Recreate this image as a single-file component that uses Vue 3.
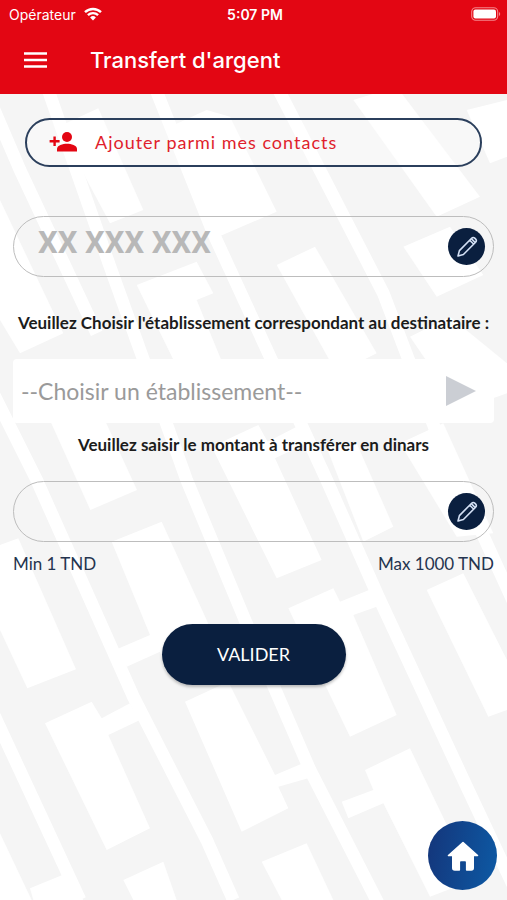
<template>
  <div class="screen">
    <svg class="backdrop" viewBox="0 0 1521 2700" preserveAspectRatio="xMidYMin slice" aria-hidden="true">
      <polyline v-for="line in lanes" :key="line" :points="line" />
      <polygon v-for="shape in blocks" :key="shape" :points="shape" />
    </svg>

    <header class="app-header">
      <div class="status-bar">
        <div class="carrier">
          <span>Opérateur</span>
          <svg width="18" height="14" viewBox="0 0 18 14" aria-hidden="true">
            <g fill="none" stroke="#fff" stroke-width="2.4">
              <path d="M1 5.2a11.6 11.6 0 0 1 16 0" />
              <path d="M3.9 8.2a7.4 7.4 0 0 1 10.2 0" />
            </g>
            <path d="M9 13.4 6.1 10.4a4.2 4.2 0 0 1 5.8 0z" fill="#fff" />
          </svg>
        </div>
        <span class="time">5:07 PM</span>
        <div class="battery">
          <svg width="30" height="14" viewBox="0 0 30 14" aria-hidden="true">
            <rect x="0.7" y="0.7" width="26" height="12.6" rx="4" fill="none" stroke="#f5868c" stroke-width="1.1" />
            <rect x="2.4" y="2.4" width="22.6" height="9.2" rx="2" fill="#fff" />
            <path d="M28 5v4c1.6-.6 1.6-3.4 0-4z" fill="#f5868c" />
          </svg>
        </div>
      </div>
      <div class="title-bar">
        <button class="menu-btn" type="button" aria-label="Menu">
          <svg width="24" height="18" viewBox="0 0 24 18">
            <path d="M0 2.5h23M0 9h23M0 15.5h23" stroke="#fff" stroke-width="2.4" />
          </svg>
        </button>
        <h1>Transfert d'argent</h1>
      </div>
    </header>

    <form class="transfer-form" @submit.prevent>
      <button class="contact-btn" type="button">
        <svg width="30" height="24" viewBox="0 0 30 24" fill="#e30613" aria-hidden="true">
          <circle cx="18" cy="7" r="5" />
          <path d="M8 21.600v-2.600c0-3.600 5.800-5.200 10-5.200s10 1.600 10 5.200v2.600z" />
          <path d="M4.400 6.400h2.400v3.600h3.800v2.400H6.800v3.600H4.400v-3.600H.6V10h3.800z" />
        </svg>
        <span>Ajouter parmi mes contacts</span>
      </button>

      <div class="field phone">
        <input v-model="phone" type="tel" placeholder="XX XXX XXX" aria-label="Numéro" />
        <button class="edit-btn" type="button" aria-label="Modifier le numéro">
          <svg width="24" height="24" viewBox="0 0 24 24">
            <path d="M3 21l1.400-5.400L16.600 3.200c1-1 2.200-1 3.100-.1l1 1c.9.900.9 2.100-.1 3.100L8.400 19.500z M14.700 5.200l4.100 4.100M16.300 3.600l4.100 4.100" />
          </svg>
        </button>
      </div>

      <label class="caption" for="bank">Veuillez Choisir l'établissement correspondant au destinataire :</label>

      <div class="select-box">
        <select id="bank" v-model="bank">
          <option value="">--Choisir un établissement--</option>
        </select>
        <svg width="30" height="32" viewBox="0 0 30 32" aria-hidden="true">
          <path d="M0 1l30 15L0 31z" fill="#cbced4" />
        </svg>
      </div>

      <label class="caption" for="amount">Veuillez saisir le montant à transférer en dinars</label>

      <div class="field amount">
        <input id="amount" v-model="amount" type="text" inputmode="decimal" />
        <button class="edit-btn" type="button" aria-label="Modifier le montant">
          <svg width="24" height="24" viewBox="0 0 24 24">
            <path d="M3 21l1.400-5.400L16.600 3.200c1-1 2.200-1 3.100-.1l1 1c.9.900.9 2.100-.1 3.100L8.400 19.500z M14.700 5.200l4.100 4.100M16.300 3.600l4.100 4.100" />
          </svg>
        </button>
      </div>

      <div class="limits">
        <span>Min 1 TND</span>
        <span>Max 1000 TND</span>
      </div>

      <button class="submit-btn" type="submit">VALIDER</button>
    </form>

    <button class="home-btn" type="button" aria-label="Accueil">
      <svg width="34" height="32" viewBox="0 0 34 32">
        <path
          d="M17 2.500 2.500 15.500h4.300V28q0 2 2 2h4.500v-8q0-1.600 1.600-1.600h4.200q1.600 0 1.600 1.600v8h4.500q2 0 2-2V15.500h4.300z"
          fill="#fff" stroke="#fff" stroke-width="1.600" stroke-linejoin="round"
        />
      </svg>
    </button>
  </div>
</template>

<script setup>
import { ref } from 'vue';

const phone = ref('');
const bank = ref('');
const amount = ref('');

// slanted lanes and blocks of the watermark
const lanes = [
  '-30,300 60,510 290,1000',
  '-260,1180 -20,2140 240,2700',
  '-30,1160 110,1440 400,2090 620,2520 700,2700',
  '120,200 330,800 560,1440 735,1860 930,2310 1150,2740',
  '440,200 640,700 980,1440 1135,1790 1400,2360 1560,2700',
  '800,200 1150,880 1310,1300 1560,1850'
];

const blocks = [
  '175,380 295,325 430,630 330,670',
  '410,855 590,785 640,880 590,900 680,1120 540,1120',
  '500,385 620,330 690,350 830,635 645,715',
  '830,795 945,740 1130,1060 1010,1120',
  '1060,300 1190,260 1440,590 1310,650',
  '1400,330 1521,300 1521,470 1470,490',
  '1210,740 1350,680 1450,825 1310,890',
  '1230,1010 1350,950 1521,1090 1521,1180 1380,1230',
  '0,600 190,1000 60,1060 0,960',
  '100,1150 236,1090 411,1470 271,1530',
  '635,1340 775,1275 803,1325 890,1280 920,1330 825,1375 965,1680 830,1735',
  '0,1635 55,1615 228,2008 82,2065 0,1890',
  '335,1625 485,1565 620,1860 660,1960 500,2020 480,1955 380,2000 345,1950 450,1905',
  '975,1330 1070,1330 1180,1580 1090,1625',
  '1200,1330 1330,1270 1480,1600 1370,1610',
  '865,1825 1000,1765 1020,1805 1120,1765 1145,1815 1060,1845 1190,2145 1050,2210',
  '1280,1770 1390,1720 1521,1980 1521,2130 1465,2150',
  '555,2105 685,2045 825,2325 920,2285 940,2330 835,2360 865,2425 725,2495',
  '135,2170 275,2105 305,2155 390,2110 420,2160 325,2205 450,2485 320,2550',
  '1095,2310 1230,2245 1420,2640 1290,2690 1150,2410 1045,2455 1025,2405 1120,2370',
  '90,2665 200,2620 250,2700 100,2700',
  '0,2500 95,2700 0,2700',
  '370,2640 490,2585 530,2700 400,2700',
  '785,2585 920,2530 1000,2700 845,2700'
];
</script>

<style>
body {
  margin: 0;
  background: #f5f5f5;
}
</style>

<style scoped>
* {
  box-sizing: border-box;
}

.screen {
  position: relative;
  display: flex;
  flex-direction: column;
  min-height: 100vh;
  overflow: hidden;
  background: #f5f5f5;
  font-family: Lato, "Liberation Sans", sans-serif;
}

.backdrop {
  position: absolute;
  inset: 0;
  width: 100%;
  height: 100%;
}

.backdrop polygon {
  fill: #fff;
}

.backdrop polyline {
  fill: none;
  stroke: #fff;
  stroke-width: 38;
}

button {
  border: none;
  padding: 0;
  font-family: inherit;
  cursor: pointer;
}

svg {
  display: block;
  flex: none;
}

.app-header {
  position: relative;
  background: #e30613;
  color: #fff;
  font-family: Inter, Roboto, sans-serif;
}

.status-bar {
  display: grid;
  grid-template-columns: 1fr auto 1fr;
  align-items: center;
  height: 28px;
  padding: 0 6px 0 9px;
  font-size: 14px;
}

.carrier {
  display: flex;
  align-items: center;
  gap: 8px;
}

.time {
  font-weight: 600;
}

.battery {
  display: flex;
  justify-content: flex-end;
}

.title-bar {
  display: flex;
  align-items: center;
  gap: 42px;
  height: 66px;
  padding: 0 24px 2px;
}

.menu-btn {
  background: none;
}

h1 {
  margin: 0;
  font-size: 22px;
  line-height: 28px;
  font-weight: 500;
}

.transfer-form {
  position: relative;
  display: flex;
  flex-direction: column;
  padding: 24px 13px;
}

.contact-btn {
  display: flex;
  align-items: center;
  gap: 16px;
  height: 49px;
  margin: 0 12px;
  padding: 0 22px 2px;
  border: 2px solid #2b3f5c;
  border-radius: 25px;
  background: rgba(255, 255, 255, 0.3);
  color: #e01f2d;
  font-size: 18px;
  letter-spacing: 1px;
}

.field {
  display: flex;
  align-items: center;
  height: 61px;
  padding: 0 8px 0 24px;
  border: 1px solid #bdbdbd;
  border-radius: 31px;
}

.phone {
  margin-top: 49px;
}

.field input {
  flex: 1;
  min-width: 0;
  height: 100%;
  padding: 0 0 8px;
  border: none;
  outline: none;
  background: none;
  color: #0a1f3f;
  font-family: Roboto, Lato, sans-serif;
  font-size: 31px;
  font-weight: 700;
}

.field input::placeholder {
  color: #b8b8b8;
  opacity: 1;
}

.edit-btn {
  display: flex;
  align-items: center;
  justify-content: center;
  width: 37px;
  height: 37px;
  border-radius: 50%;
  background: #0a1f3f;
}

.edit-btn path {
  fill: none;
  stroke: #d3e0f5;
  stroke-width: 1.6;
  stroke-linejoin: round;
}

.caption {
  text-align: center;
  color: #1c1c1c;
  font-size: 17px;
  line-height: 20px;
  font-weight: 700;
}

.phone + .caption {
  margin: 36px -8px 26px;
}

.select-box {
  display: flex;
  align-items: center;
  height: 64px;
  padding: 0 18px 0 8px;
  border-radius: 4px;
  background: #fff;
}

.select-box select {
  flex: 1;
  min-width: 0;
  height: 100%;
  padding: 0;
  border: none;
  outline: none;
  appearance: none;
  background: none;
  color: #9a9a9a;
  font-family: inherit;
  font-size: 23px;
}

.select-box + .caption {
  margin: 12px 0 26px;
}

.limits {
  display: flex;
  justify-content: space-between;
  margin-top: 10px;
  color: #24344f;
  font-size: 17px;
  line-height: 24px;
}

.submit-btn {
  align-self: center;
  width: 184px;
  height: 61px;
  margin-top: 48px;
  padding-bottom: 2px;
  border-radius: 31px;
  background: #0a1f3f;
  box-shadow: 0 2px 3px rgba(0, 0, 0, 0.25);
  color: #fff;
  font-size: 18px;
}

.home-btn {
  position: fixed;
  right: 10px;
  bottom: 10px;
  display: flex;
  align-items: center;
  justify-content: center;
  width: 69px;
  height: 69px;
  border-radius: 50%;
  background: linear-gradient(100deg, #14357a, #0d5aa5);
}
</style>
